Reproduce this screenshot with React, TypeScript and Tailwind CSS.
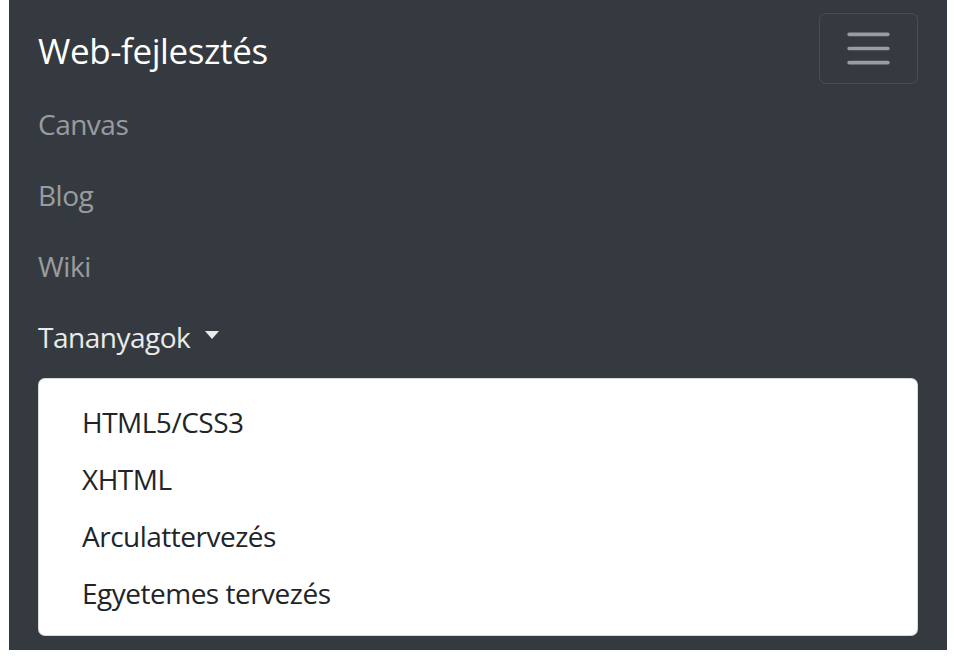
const links = ['Canvas', 'Blog', 'Wiki']
const materials = ['HTML5/CSS3', 'XHTML', 'Arculattervezés', 'Egyetemes tervezés']

export default function App() {
  return (
    <div className="min-h-[661px] bg-white font-['Open_Sans',sans-serif]">
      <nav className="ml-[9px] w-[938px] bg-[#343a40] px-[29px] pt-[13px] pb-[14px]">
        {/* Brand row */}
        <div className="flex h-[75px] items-start justify-between">
          <a className="mt-[11px] text-[35px] leading-[53px] tracking-[-0.4px] text-white">Web-fejlesztés</a>
          <button className="flex h-[71px] w-[99px] items-center justify-center rounded-[7px] border border-white/10">
            <svg viewBox="0 0 30 30" className="h-[53px] w-[53px]">
              <path
                d="M4 7h22M4 15h22M4 23h22"
                stroke="rgba(255,255,255,0.5)"
                strokeWidth="2"
                strokeLinecap="round"
              />
            </svg>
          </button>
        </div>

        {/* Links */}
        <ul className="tracking-[-0.5px]">
          {links.map(l => (
            <li key={l} className="flex h-[71px] items-center text-[28px] text-white/50">
              {l}
            </li>
          ))}
          <li className="flex h-[71px] items-center text-[28px] text-white/90">
            Tananyagok
            <span className="ml-[15px] mt-[-3px] h-0 w-0 border-x-[7.5px] border-t-[8px] border-x-transparent border-t-white/90" />
          </li>
        </ul>

        {/* Dropdown */}
        <div className="mt-[6px] rounded-[7px] border border-black/15 bg-white py-[14px] tracking-[-0.5px]">
          {materials.map(m => (
            <div key={m} className="flex h-[57px] items-center px-[43px] text-[28px] text-[#212529]">
              {m}
            </div>
          ))}
        </div>
      </nav>
    </div>
  )
}
